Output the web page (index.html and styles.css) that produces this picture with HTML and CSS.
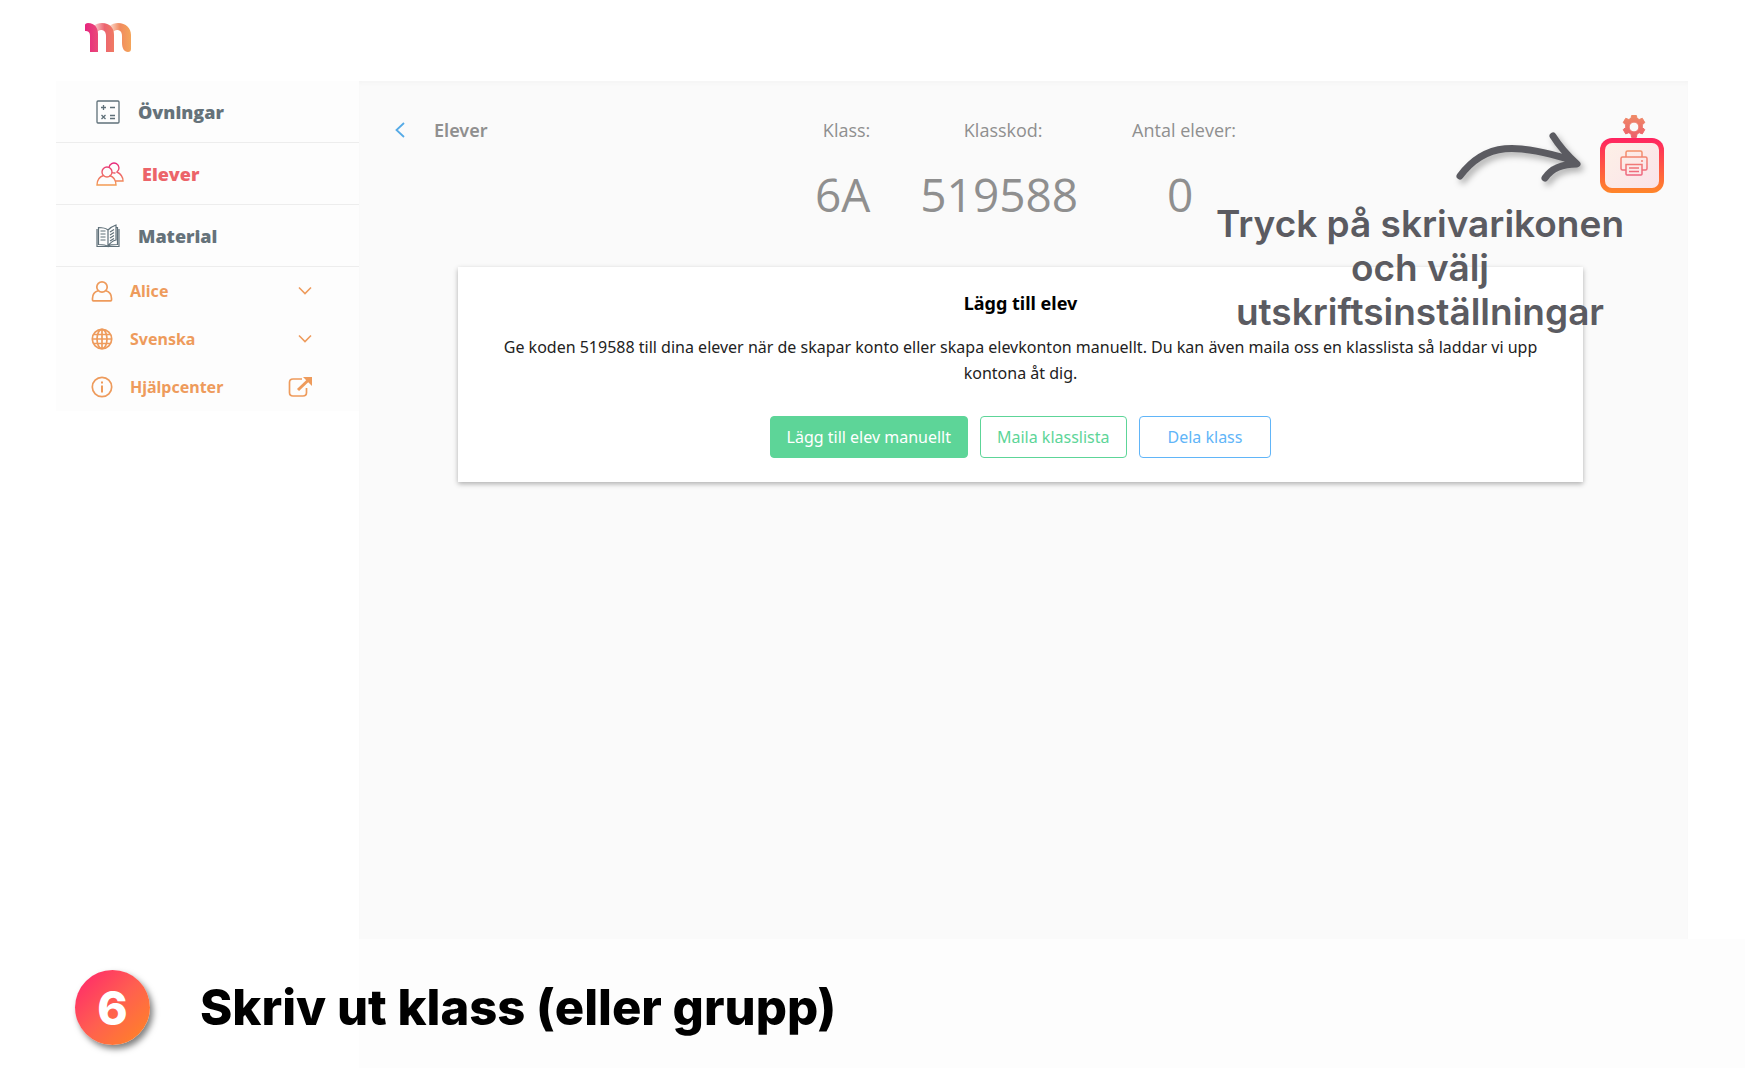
FILE: index.html
```html
<!DOCTYPE html>
<html lang="sv">
<head>
<meta charset="utf-8">
<meta name="viewport" content="width=device-width, initial-scale=1">
<title>Skriv ut klass</title>
<link rel="stylesheet" href="styles.css">
</head>
<body>
<header class="header">
  <a class="logo" href="#" aria-label="Start">
    <svg width="46" height="30" viewBox="0 0 46 30">
      <defs>
        <linearGradient id="g1" x1="0" x2="1" y1="0" y2="0"><stop offset="0" stop-color="#e6267f"/><stop offset="1" stop-color="#ea4a78"/></linearGradient>
        <linearGradient id="g2" x1="0" x2="1" y1="0" y2="0"><stop offset="0" stop-color="#fbdcdc"/><stop offset=".55" stop-color="#ec6470"/><stop offset="1" stop-color="#f07a62"/></linearGradient>
        <linearGradient id="g3" x1="0" x2="1" y1="0" y2="0"><stop offset="0" stop-color="#fbe0d8"/><stop offset=".5" stop-color="#f18a5e"/><stop offset="1" stop-color="#f4a55a"/></linearGradient>
      </defs>
      <path fill="url(#g3)" d="M24 3C27 1 30 0 33 0c8 0 13 5 13 12v14c0 2-1 3-3 3-4 0-6-4-6-9V13c0-4-2-6-5-6-2 0-3 1-4 2z"/>
      <path fill="url(#g2)" d="M8 3c3-2 6-3 9-3 8 0 12 5 12 12v17h-8V13c0-4-2-6-5-6-2 0-3 1-4 2z"/>
      <path fill="url(#g1)" d="M0 8V2c0-1 1-2 3-2 7 0 10 5 10 11v18H5V13C5 9 3 8 0 8z"/>
    </svg>
  </a>
</header>
<div class="shell">
  <nav class="sidebar">
    <a class="nav-item" href="#">
      <svg width="24" height="24" viewBox="0 0 24 24" fill="none" stroke="#5f7079" stroke-width="1.3"><rect x="1" y="1" width="22" height="22" rx="1"/><path d="M5 7.500h5M7.500 5v5M14 7.500h5M5.500 15l4 4M9.500 15l-4 4M14 15.500h5M14 18.500h5"/></svg>
      <span>Övningar</span>
    </a>
    <a class="nav-item active" href="#">
      <svg width="28" height="24" viewBox="0 0 28 24" fill="none" stroke="url(#gp)" stroke-width="1.400"><defs><linearGradient id="gp" gradientUnits="userSpaceOnUse" x1="0" x2="0" y1="0" y2="24"><stop offset="0" stop-color="#e6267f"/><stop offset="1" stop-color="#f4a052"/></linearGradient></defs><circle cx="11" cy="10" r="5"/><path d="M7.500 13.500C3 15 1 18.500 1 23h19c0-4.500-2-8-6.500-9.500M13 5.500a5 5 0 1 1 8 4.500c4 2 6 5 6 9h-7.500M16 10.500c1 .6 2 .6 3.500.5"/></svg>
      <span>Elever</span>
    </a>
    <a class="nav-item" href="#">
      <svg width="24" height="24" viewBox="0 0 24 24" fill="none" stroke="#5f7079" stroke-width="1.200"><path d="M12 6C9 3.500 6 3.500 2.500 3.500v17c4 0 7 0 9.500 2 1-2 4-2 9.500-2v-17h-1M12 6v16.500M1 5v17.500h22V5M12 6c2-2 5-4 8-5v15c-4 1-6 3-8 6M4.500 7h5M4.500 10h5M4.500 13h5M4.500 16h5M14 8l4-2.500M14 11l4-2.500M14 14l4-2.500M14 17l4-2.500"/></svg>
      <span>Material</span>
    </a>
    <a class="sub-item" href="#">
      <svg width="22" height="22" viewBox="0 0 22 22" fill="none" stroke="#ee9b5c" stroke-width="1.700"><circle cx="11" cy="7" r="5.200"/><path d="M7 10.800C3 12 1.500 15 1.500 18.500V20q0 .8.800.8h17.400q.8 0 .8-.8v-1.500c0-3.500-1.500-6.500-5.500-7.700"/></svg>
      <span>Alice</span>
      <svg class="trail" width="14" height="10" viewBox="0 0 14 10" fill="none" stroke="#ee9b5c" stroke-width="1.600"><path d="M1 1.500l6 6 6-6"/></svg>
    </a>
    <a class="sub-item" href="#">
      <svg width="22" height="22" viewBox="0 0 22 22" fill="none" stroke="#ee9b5c" stroke-width="1.700"><circle cx="11" cy="11" r="9.700"/><ellipse cx="11" cy="11" rx="5" ry="9.700"/><path d="M11 1v20M1.300 11h19.400M3 6.500h16M3 15.500h16"/></svg>
      <span>Svenska</span>
      <svg class="trail" width="14" height="10" viewBox="0 0 14 10" fill="none" stroke="#ee9b5c" stroke-width="1.600"><path d="M1 1.500l6 6 6-6"/></svg>
    </a>
    <a class="sub-item" href="#">
      <svg width="22" height="22" viewBox="0 0 22 22" fill="none" stroke="#ee9b5c" stroke-width="1.700"><circle cx="11" cy="11" r="9.700"/><path stroke-width="2" d="M11 9.500v7M11 5.500v2"/></svg>
      <span>Hjälpcenter</span>
      <svg class="trail" width="24" height="22" viewBox="0 0 24 22" fill="none" stroke="#ee9b5c" stroke-width="1.700"><path d="M14 3H5Q1.500 3 1.500 6.500v10Q1.500 20 5 20h10q3.500 0 3.500-3.500V12"/><path stroke-width="3" d="M10 14L20 4.500"/><path fill="#ee9b5c" stroke="none" d="M15 1h9v9z"/></svg>
    </a>
  </nav>
  <main class="main">
    <div class="topbar">
      <a class="back" href="#">
        <svg width="10" height="16" viewBox="0 0 10 16" fill="none" stroke="#55aae6" stroke-width="1.800"><path d="M9 1L1.500 8 9 15"/></svg>
        <span>Elever</span>
      </a>
      <dl class="stats">
        <div><dt>Klass:</dt><dd>6A</dd></div>
        <div><dt>Klasskod:</dt><dd>519588</dd></div>
        <div><dt>Antal elever:</dt><dd>0</dd></div>
      </dl>
      <div class="tools">
        <button class="tool" type="button" aria-label="Inställningar">
          <svg width="24" height="24" viewBox="0 0 24 24"><defs><linearGradient id="gg" x1="0" x2="0" y1="0" y2="1"><stop offset="0" stop-color="#ef8a66"/><stop offset="1" stop-color="#ec5f6c"/></linearGradient></defs><path fill="url(#gg)" stroke="url(#gg)" stroke-linejoin="round" fill-rule="evenodd" d="M9.600 .5h4.800l.6 2.800 2.200 1.200 3.100-1.200 2.500 4.300-2.500 2.200v2.700l2.500 2.100-2.500 4.300-3.100-1.200-2.200 1.300-.6 3.400H9.600L9 19l-2.200-1.300-3.100 1.200-2.500-4.300 2.500-2.100V9.800L1.200 7.600l2.500-4.300 3.100 1.200L9 3.300zM12 7.100a4.900 4.900 0 1 0 0 9.800 4.900 4.900 0 0 0 0-9.800z"/></svg>
        </button>
        <button class="tool print" type="button" aria-label="Skriv ut">
          <svg width="28" height="26" viewBox="0 0 28 26" fill="none" stroke="url(#gr)" stroke-width="1.500"><defs><linearGradient id="gr" gradientUnits="userSpaceOnUse" x1="0" x2="0" y1="0" y2="26"><stop offset="0" stop-color="#f4936a"/><stop offset="1" stop-color="#ee6480"/></linearGradient></defs><path d="M6 7V2.500Q6 1 7.500 1h13Q22 1 22 2.500V7M6 20H2.500Q1 20 1 18.500v-10Q1 7 2.500 7h23Q27 7 27 8.500v10q0 1.500-1.500 1.500H22M6 14.500h16V24q0 1-1 1H7q-1 0-1-1zM9 18h10M9 21.500h10M21 11h2"/></svg>
        </button>
      </div>
    </div>
    <section class="card">
      <h2>Lägg till elev</h2>
      <p>Ge koden 519588 till dina elever när de skapar konto eller skapa elevkonton manuellt. Du kan även maila oss en klasslista så laddar vi upp kontona åt dig.</p>
      <div class="actions">
        <button class="btn solid" type="button">Lägg till elev manuellt</button>
        <button class="btn green" type="button">Maila klasslista</button>
        <button class="btn blue" type="button">Dela klass</button>
      </div>
    </section>
    <div class="callout">
      <svg class="arrow" width="130" height="60" viewBox="0 0 130 60" fill="none" stroke="#5b5b61" stroke-width="7" stroke-linecap="round" stroke-linejoin="round"><path d="M6 46C32 11 64 14 114 29M99 6c5 8 13 18 24 28-15 0-26 5-32 14"/></svg>
      <p>Tryck på skrivarikonen<br>och välj<br>utskriftsinställningar</p>
    </div>
  </main>
</div>
<footer class="step">
  <span class="step-number">6</span>
  <h1>Skriv ut klass (eller grupp)</h1>
</footer>
</body>
</html>
```
FILE: styles.css
```css
* { box-sizing: border-box; }
body {
  margin: 0;
  min-height: 100vh;
  display: flex;
  flex-direction: column;
  background: #fff;
  color: #222;
  font-family: "Noto Sans", "Open Sans", sans-serif;
  font-size: 16px;
}
a { color: inherit; text-decoration: none; }
button { font: inherit; cursor: pointer; }
h1, h2, p, dl, dd { margin: 0; }
svg { display: block; flex: none; }

.header { height: 81px; padding: 23px 85px 0; }
.logo { display: inline-block; }

.shell { flex: 1; display: flex; padding: 0 57px 0 56px; }
.sidebar { width: 303px; flex: none; align-self: flex-start; background: #fdfdfd; }
.nav-item {
  height: 62px;
  display: flex;
  align-items: center;
  gap: 18px;
  padding-left: 40px;
  border-bottom: 1px solid #ededed;
  color: #65727a;
  font-family: "Open Sans", sans-serif;
  font-size: 18px;
  font-weight: 800;
}
.nav-item.active { color: #ec6469; }
.sub-item {
  height: 48px;
  display: flex;
  align-items: center;
  gap: 17px;
  padding: 0 47px 0 35px;
  color: #ee9b5c;
  font-weight: 700;
}
.trail { margin-left: auto; }

.main {
  position: relative;
  flex: 1;
  padding: 0 105px 0 99px;
  background: #fafafa;
  box-shadow: inset 0 4px 4px -2px #f4f4f4;
}
.topbar {
  display: grid;
  grid-template-columns: 1fr auto 1fr;
  margin: 0 -81px 0 -63px;
  padding-top: 34px;
  height: 186px;
}
.back {
  display: flex;
  align-items: center;
  align-self: start;
  gap: 29px;
  height: 30px;
  color: #8f8f8f;
  font-size: 18px;
  font-weight: 600;
}
.stats {
  display: flex;
  gap: 50px;
  margin-right: 12px;
  color: #8f8f8f;
  font-family: "Open Sans", sans-serif;
  text-align: center;
}
.stats dt { margin: 0 -4px 0 4px; font-size: 18px; line-height: 30px; white-space: nowrap; }
.stats dd { font-size: 46px; line-height: 64px; margin-top: 17px; }
.tools { display: flex; flex-direction: column; align-items: flex-end; }
.tool {
  display: flex;
  justify-content: center;
  width: 64px;
  padding: 0 0 0 3px;
  border: 0;
  background: none;
}
.print {
  height: 55px;
  margin-top: -1px;
  padding-top: 7px;
  border: 5px solid transparent;
  border-radius: 12px;
  background:
    linear-gradient(135deg, #fdf0e6, #fae3ea) padding-box,
    linear-gradient(#ff2360, #ff862a) border-box;
}

.card {
  padding: 22px 32px 24px;
  background: #fff;
  box-shadow: 0 2px 5px rgba(0, 0, 0, .3);
  text-align: center;
}
.card h2 { color: #000; font-size: 18px; font-weight: 700; line-height: 28px; }
.card p { margin-top: 17px; line-height: 26px; }
.actions { display: flex; justify-content: center; gap: 12px; margin-top: 30px; }
.btn {
  height: 42px;
  padding: 0 16px;
  border: 1px solid currentColor;
  border-radius: 4px;
  background: #fff;
}
.solid { border-color: #5dd598; background: #5dd598; color: #fff; }
.green { color: #5dd598; }
.blue { padding: 0 28px; color: #61b5f8; }

.callout {
  position: absolute;
  top: 49px;
  right: 48px;
  width: 440px;
  color: #5b5b61;
  font-family: Inter, sans-serif;
  font-size: 37px;
  font-weight: 600;
  line-height: 44px;
  text-align: center;
  pointer-events: none;
}
.arrow { margin: 0 0 12px 254px; filter: drop-shadow(3px 4px 3px rgba(0, 0, 0, .3)); }

.step {
  display: flex;
  align-items: center;
  gap: 50px;
  min-height: 129px;
  padding: 8px 75px 0;
  background: linear-gradient(90deg, #fff 359px, #fdfdfd 359px) no-repeat;
}
.step-number {
  display: flex;
  align-items: center;
  justify-content: center;
  width: 75px;
  height: 75px;
  border-radius: 50%;
  background: linear-gradient(135deg, #ff2f68 10%, #ff5f50 50%, #ff802a 90%);
  box-shadow: 3px 4px 6px rgba(0, 0, 0, .5);
  color: #fff;
  font-family: Inter, sans-serif;
  font-size: 46px;
  font-weight: 800;
}
.step h1 { color: #000; font-family: Inter, sans-serif; font-size: 49px; font-weight: 800; line-height: 60px; }
```
